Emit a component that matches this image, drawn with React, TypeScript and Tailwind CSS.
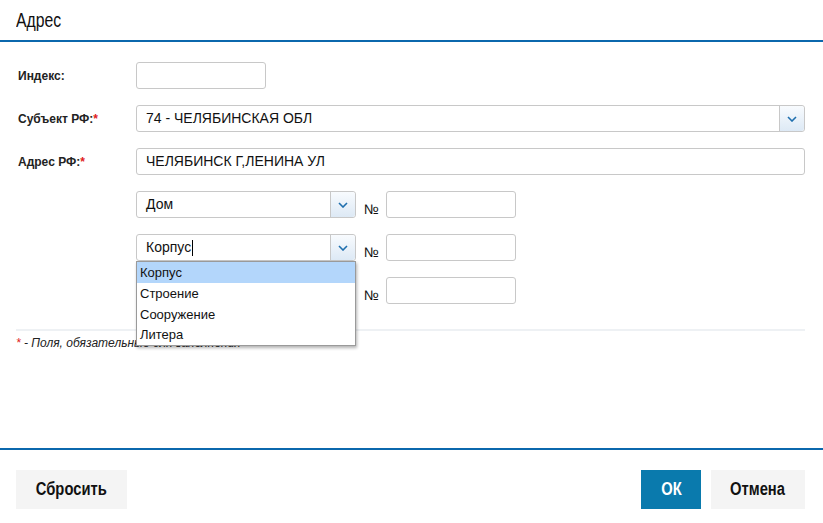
import React from "react";

const sans = { fontFamily: '"Liberation Sans", Arial, sans-serif' };

function Chevron() {
  return (
    <svg width="10" height="6" viewBox="0 0 10 6" fill="none">
      <path d="M1 1 L5 5 L9 1" stroke="#1f6fae" strokeWidth="1.6" />
    </svg>
  );
}

function Select({ value, width, caret }: { value: string; width: string; caret?: boolean }) {
  return (
    <div className={`flex h-[27px] ${width} shrink-0 rounded-[3px] border border-[#c8c8c8] bg-white`}>
      <div className="flex flex-1 items-center pl-[9px] text-[14px] text-[#111]">
        {value}
        {caret && <span className="ml-[1px] inline-block h-[16px] w-px bg-black" />}
      </div>
      <div className="flex w-[25px] items-center justify-center rounded-r-[3px] border-l border-[#c8c8c8] bg-gradient-to-b from-[#f8fbfe] to-[#dde9f5]">
        <Chevron />
      </div>
    </div>
  );
}

function Input({ width, value }: { width: string; value?: string }) {
  return (
    <div
      className={`flex h-[27px] ${width} shrink-0 items-center rounded-[3px] border border-[#c8c8c8] bg-white pl-[9px] text-[14px] text-[#111]`}
    >
      {value}
    </div>
  );
}

function Label({ text, req }: { text: string; req?: boolean }) {
  return (
    <div className="w-[120px] shrink-0 pl-[2px] text-[12px] font-bold text-[#222]">
      {text}
      {req && <span className="text-[#e0201a]">*</span>}
    </div>
  );
}

function Num() {
  return <span className="relative top-[5px] ml-[8px] w-[22px] text-[14px] text-[#111]">№</span>;
}

export default function App() {
  return (
    <div className="flex h-[523px] w-[823px] flex-col bg-white" style={sans}>
      <div className="h-[40px] pl-[16px] pt-[6px] text-[21px] leading-[28px] text-[#111]">
        <span className="inline-block origin-left scale-x-[0.75]">Адрес</span>
      </div>
      <div className="h-[2px] bg-[#0b68ad]" />
      <div className="flex flex-1 flex-col pl-[16px] pr-[18px] pt-[20px]">
        <div className="flex h-[27px] items-center">
          <Label text="Индекс:" />
          <Input width="w-[130px]" />
        </div>
        <div className="mt-[16px] flex h-[27px] items-center">
          <Label text="Субъект РФ:" req />
          <Select value="74 - ЧЕЛЯБИНСКАЯ ОБЛ" width="w-[669px]" />
        </div>
        <div className="mt-[16px] flex h-[27px] items-center">
          <Label text="Адрес РФ:" req />
          <Input width="w-[669px]" value="ЧЕЛЯБИНСК Г,ЛЕНИНА УЛ" />
        </div>
        <div className="ml-[120px] mt-[16px] flex flex-col gap-[16px]">
          <div className="flex h-[27px] items-center">
            <Select value="Дом" width="w-[220px]" />
            <Num />
            <Input width="w-[130px]" />
          </div>
          <div className="relative flex h-[27px] items-center">
            <Select value="Корпус" width="w-[220px]" caret />
            <Num />
            <Input width="w-[130px]" />
            <div className="absolute left-0 top-[27px] z-10 w-[220px] border border-[#9a9a9a] bg-white text-[13px] text-[#111] shadow-[1px_2px_3px_rgba(0,0,0,0.3)]">
              <div className="h-[21px] bg-[#b3d6fb] pl-[3px] leading-[21px]">Корпус</div>
              <div className="h-[21px] pl-[3px] leading-[21px]">Строение</div>
              <div className="h-[21px] pl-[3px] leading-[21px]">Сооружение</div>
              <div className="h-[20px] pl-[3px] leading-[20px]">Литера</div>
            </div>
          </div>
          <div className="flex h-[27px] items-center">
            <div className="w-[220px] shrink-0" />
            <Num />
            <Input width="w-[130px]" />
          </div>
        </div>
        <div className="mt-[25px] h-[2px] w-[789px] bg-[#eef1f4]" />
        <div className="mt-[3px] text-[12px] italic text-[#222]">
          <span className="text-[#e0201a]">*</span> - Поля, обязательные для заполнения
        </div>
      </div>
      <div className="h-[2px] bg-[#0b68ad]" />
      <div className="flex h-[73px] items-start justify-between pl-[16px] pr-[18px] pt-[20px]">
        <button className="flex h-[39px] w-[111px] items-center justify-center bg-[#f4f4f4] text-[18px] font-bold text-[#111]">
          <span className="inline-block scale-x-[0.82]">Сбросить</span>
        </button>
        <div className="flex gap-[10px]">
          <button className="flex h-[39px] w-[60px] items-center justify-center bg-[#0a7aad] text-[18px] font-bold text-white">
            <span className="inline-block scale-x-[0.82]">ОК</span>
          </button>
          <button className="flex h-[39px] w-[94px] items-center justify-center bg-[#f4f4f4] text-[18px] font-bold text-[#111]">
            <span className="inline-block scale-x-[0.82]">Отмена</span>
          </button>
        </div>
      </div>
    </div>
  );
}
